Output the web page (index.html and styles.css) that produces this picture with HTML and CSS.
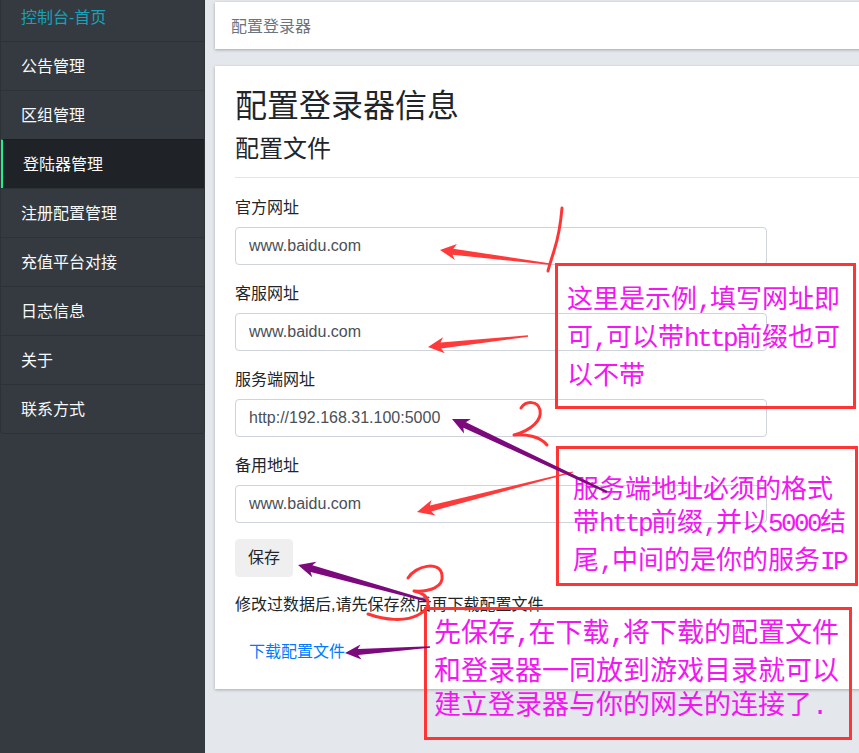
FILE: index.html
```html
<!DOCTYPE html>
<html lang="zh-CN">
<head>
<meta charset="utf-8">
<title>配置登录器</title>
<link rel="stylesheet" href="styles.css">
</head>
<body>
<div class="layout">
  <aside class="sidebar">
    <ul class="nav-list">
      <li class="nav-item nav-home">控制台-首页</li>
      <li class="nav-item">公告管理</li>
      <li class="nav-item">区组管理</li>
      <li class="nav-item nav-active">登陆器管理</li>
      <li class="nav-item">注册配置管理</li>
      <li class="nav-item">充值平台对接</li>
      <li class="nav-item">日志信息</li>
      <li class="nav-item">关于</li>
      <li class="nav-item">联系方式</li>
    </ul>
  </aside>
  <main class="main">
    <div class="topbar">配置登录器</div>
    <section class="card">
      <h1 class="title">配置登录器信息</h1>
      <h4 class="subtitle">配置文件</h4>
      <hr class="divider">
      <form class="form">
        <div class="field">
          <label class="label">官方网址</label>
          <input class="input" type="text" value="www.baidu.com">
        </div>
        <div class="field">
          <label class="label">客服网址</label>
          <input class="input" type="text" value="www.baidu.com">
        </div>
        <div class="field">
          <label class="label">服务端网址</label>
          <input class="input" type="text" value="http://192.168.31.100:5000">
        </div>
        <div class="field">
          <label class="label">备用地址</label>
          <input class="input" type="text" value="www.baidu.com">
        </div>
        <button class="btn-save" type="button">保存</button>
      </form>
      <p class="hint">修改过数据后,请先保存然后再下载配置文件.</p>
      <a class="download" href="#">下载配置文件</a>
    </section>
  </main>
</div>

<div class="annotations">
  <svg class="marks" width="859" height="753" viewBox="0 0 859 753">
    <g class="red-fill">
      <polygon points="440,250 456.9,244.1 453.3,248.7 549.1,263.2 548.9,264.8 452.5,254.7 454.9,259.9"/>
      <polygon points="428,347 443,337.3 440.6,342.6 527.9,335.2 528.1,336.8 441.2,348.6 444.8,353.2"/>
      <polygon points="417,512 431.5,500 429.9,505.6 572.9,471.5 573.1,472.5 431.3,511.4 435.5,515.5"/>
    </g>
    <g class="purple-fill">
      <polygon points="452,419 470.8,419 466,422.3 607.5,490.9 606.5,493.1 463.4,427.7 464,433.5"/>
      <polygon points="298,565 316.5,561.8 312.4,565.3 428.3,600 427.7,602 310.6,572.1 312.3,577.2"/>
      <polygon points="345,653 360.5,644.4 357.8,649.1 429.9,646.2 430.1,647.8 358.2,655.1 361.5,659.4"/>
    </g>
    <g class="red-stroke">
      <path d="M562,208 Q560,232 554,251 T548,271"/>
      <path d="M521,408 C526,400 538,401 540,410 C542,420 532,430 514,435 C525,434 540,436 547,445"/>
      <path d="M408,578 C415,566 440,560 442,575 C444,587 430,592 414,591 C432,595 432,608 418,615 C405,622 385,620 368,614"/>
    </g>
  </svg>
  <div class="note note-1">这里是示例<span class="lat">,</span>填写网址即<br>可<span class="lat">,</span>可以带<span class="lat">http</span>前缀也可<br>以不带</div>
  <div class="note note-2">服务端地址必须的格式<br>带<span class="lat">http</span>前缀<span class="lat">,</span>并以<span class="lat">5000</span>结<br>尾<span class="lat">,</span>中间的是你的服务<span class="lat">IP</span></div>
  <div class="note note-3">先保存<span class="lat">,</span>在下载<span class="lat">,</span>将下载的配置文件<br>和登录器一同放到游戏目录就可以<br>建立登录器与你的网关的连接了<span class="lat">.</span></div>
</div>
</body>
</html>
```

FILE: styles.css
```css
* {
  box-sizing: border-box;
}

html, body {
  margin: 0;
  padding: 0;
  width: 859px;
  height: 753px;
  overflow: hidden;
}

body {
  position: relative;
  font-family: "Liberation Sans", "Noto Sans CJK SC", sans-serif;
  font-size: 16px;
  line-height: 24px;
  color: #212529;
  background: #e4e7eb;
}

.layout {
  display: flex;
  height: 753px;
}

/* Sidebar */
.sidebar {
  width: 205px;
  flex: none;
  background: #343a40;
  height: 100%;
}

.nav-list {
  list-style: none;
  margin: -7px 0 0 0;
  padding: 0;
  border: 1px solid rgba(0, 0, 0, 0.13);
  border-top: none;
  border-radius: 0 0 4px 4px;
  overflow: hidden;
}

.nav-item {
  padding: 13px 20px 11px;
  line-height: 24px;
  color: #f8f9fa;
  border-top: 1px solid rgba(0, 0, 0, 0.13);
  white-space: nowrap;
}

.nav-item:first-child {
  border-top: none;
}

.nav-home {
  color: #17a2b8;
}

.nav-active {
  background: #1f2327;
  border-left: 3px solid #1ef08c;
  margin-left: -1px;
  padding-left: 20px;
}

/* Main */
.main {
  flex: 1;
  padding: 2px 0 0 10px;
  min-width: 0;
}

.topbar {
  background: #fff;
  color: #6c757d;
  padding: 13px 16px 10px;
  line-height: 24px;
  box-shadow: 0 1px 3px rgba(0, 0, 0, 0.28);
  margin-bottom: 17px;
  margin-right: -40px;
}

.card {
  background: #fff;
  padding: 21px 20px 18px;
  margin-right: -40px;
  box-shadow: 0 1px 3px rgba(0, 0, 0, 0.25);
}

.title {
  margin: 0 0 9px;
  font-size: 32px;
  line-height: 38px;
  font-weight: 400;
  color: #212529;
}

.subtitle {
  margin: 0;
  font-size: 24px;
  line-height: 29px;
  font-weight: 400;
  color: #212529;
}

.divider {
  margin: 14px 0 17px;
  border: 0;
  border-top: 1px solid rgba(0, 0, 0, 0.1);
}

.form {
  width: 532px;
  margin: 0;
}

.field {
  margin-bottom: 16px;
}

.label {
  display: block;
  padding-top: 1px;
  margin-bottom: 7px;
  line-height: 24px;
}

.input {
  display: block;
  width: 100%;
  height: 38px;
  padding: 6px 12px 6px 13px;
  font-family: "Liberation Sans", "Noto Sans CJK SC", sans-serif;
  font-size: 16px;
  line-height: 24px;
  color: #495057;
  background: #fff;
  border: 1px solid #ced4da;
  border-radius: 4px;
}

.btn-save {
  display: block;
  height: 38px;
  padding: 6px 12px;
  font-family: "Liberation Sans", "Noto Sans CJK SC", sans-serif;
  font-size: 16px;
  line-height: 24px;
  color: #212529;
  background: #efefef;
  border: 1px solid #efefef;
  border-radius: 4px;
}

.hint {
  margin: 16px 0 16px;
  line-height: 24px;
}

.download {
  display: inline-block;
  padding: 6px 12px 6px 13px;
  border: 1px solid transparent;
  line-height: 24px;
  color: #007bff;
  text-decoration: none;
}

/* Annotation layer over the screenshot */
.annotations {
  position: absolute;
  left: 0;
  top: 0;
  width: 859px;
  height: 753px;
  pointer-events: none;
}

.marks {
  position: absolute;
  left: 0;
  top: 0;
  z-index: 2;
}

.red-fill polygon {
  fill: #ff3a3a;
}

.purple-fill polygon {
  fill: #7d0a7d;
}

.red-stroke path {
  fill: none;
  stroke: #ff3535;
  stroke-width: 3;
  stroke-linecap: round;
  stroke-linejoin: round;
}

.note {
  position: absolute;
  border: 3px solid #ff3535;
  color: #f316f3;
  font-family: "Noto Sans CJK SC", sans-serif;
  font-size: 26px;
  line-height: 33px;
  white-space: nowrap;
  z-index: 1;
}

.lat {
  font-family: "Liberation Mono", monospace;
  letter-spacing: -0.1em;
}

.note-1 {
  left: 555px;
  top: 263px;
  width: 301px;
  height: 146px;
  padding: 14px 0 0 9px;
}

.note-2 {
  left: 556px;
  top: 446px;
  width: 302px;
  height: 140px;
  padding: 21px 0 0 14px;
}

.note-3 {
  left: 424px;
  top: 607px;
  width: 428px;
  height: 133px;
  padding: 4px 0 0 7px;
  font-size: 27px;
  line-height: 34px;
}
```
